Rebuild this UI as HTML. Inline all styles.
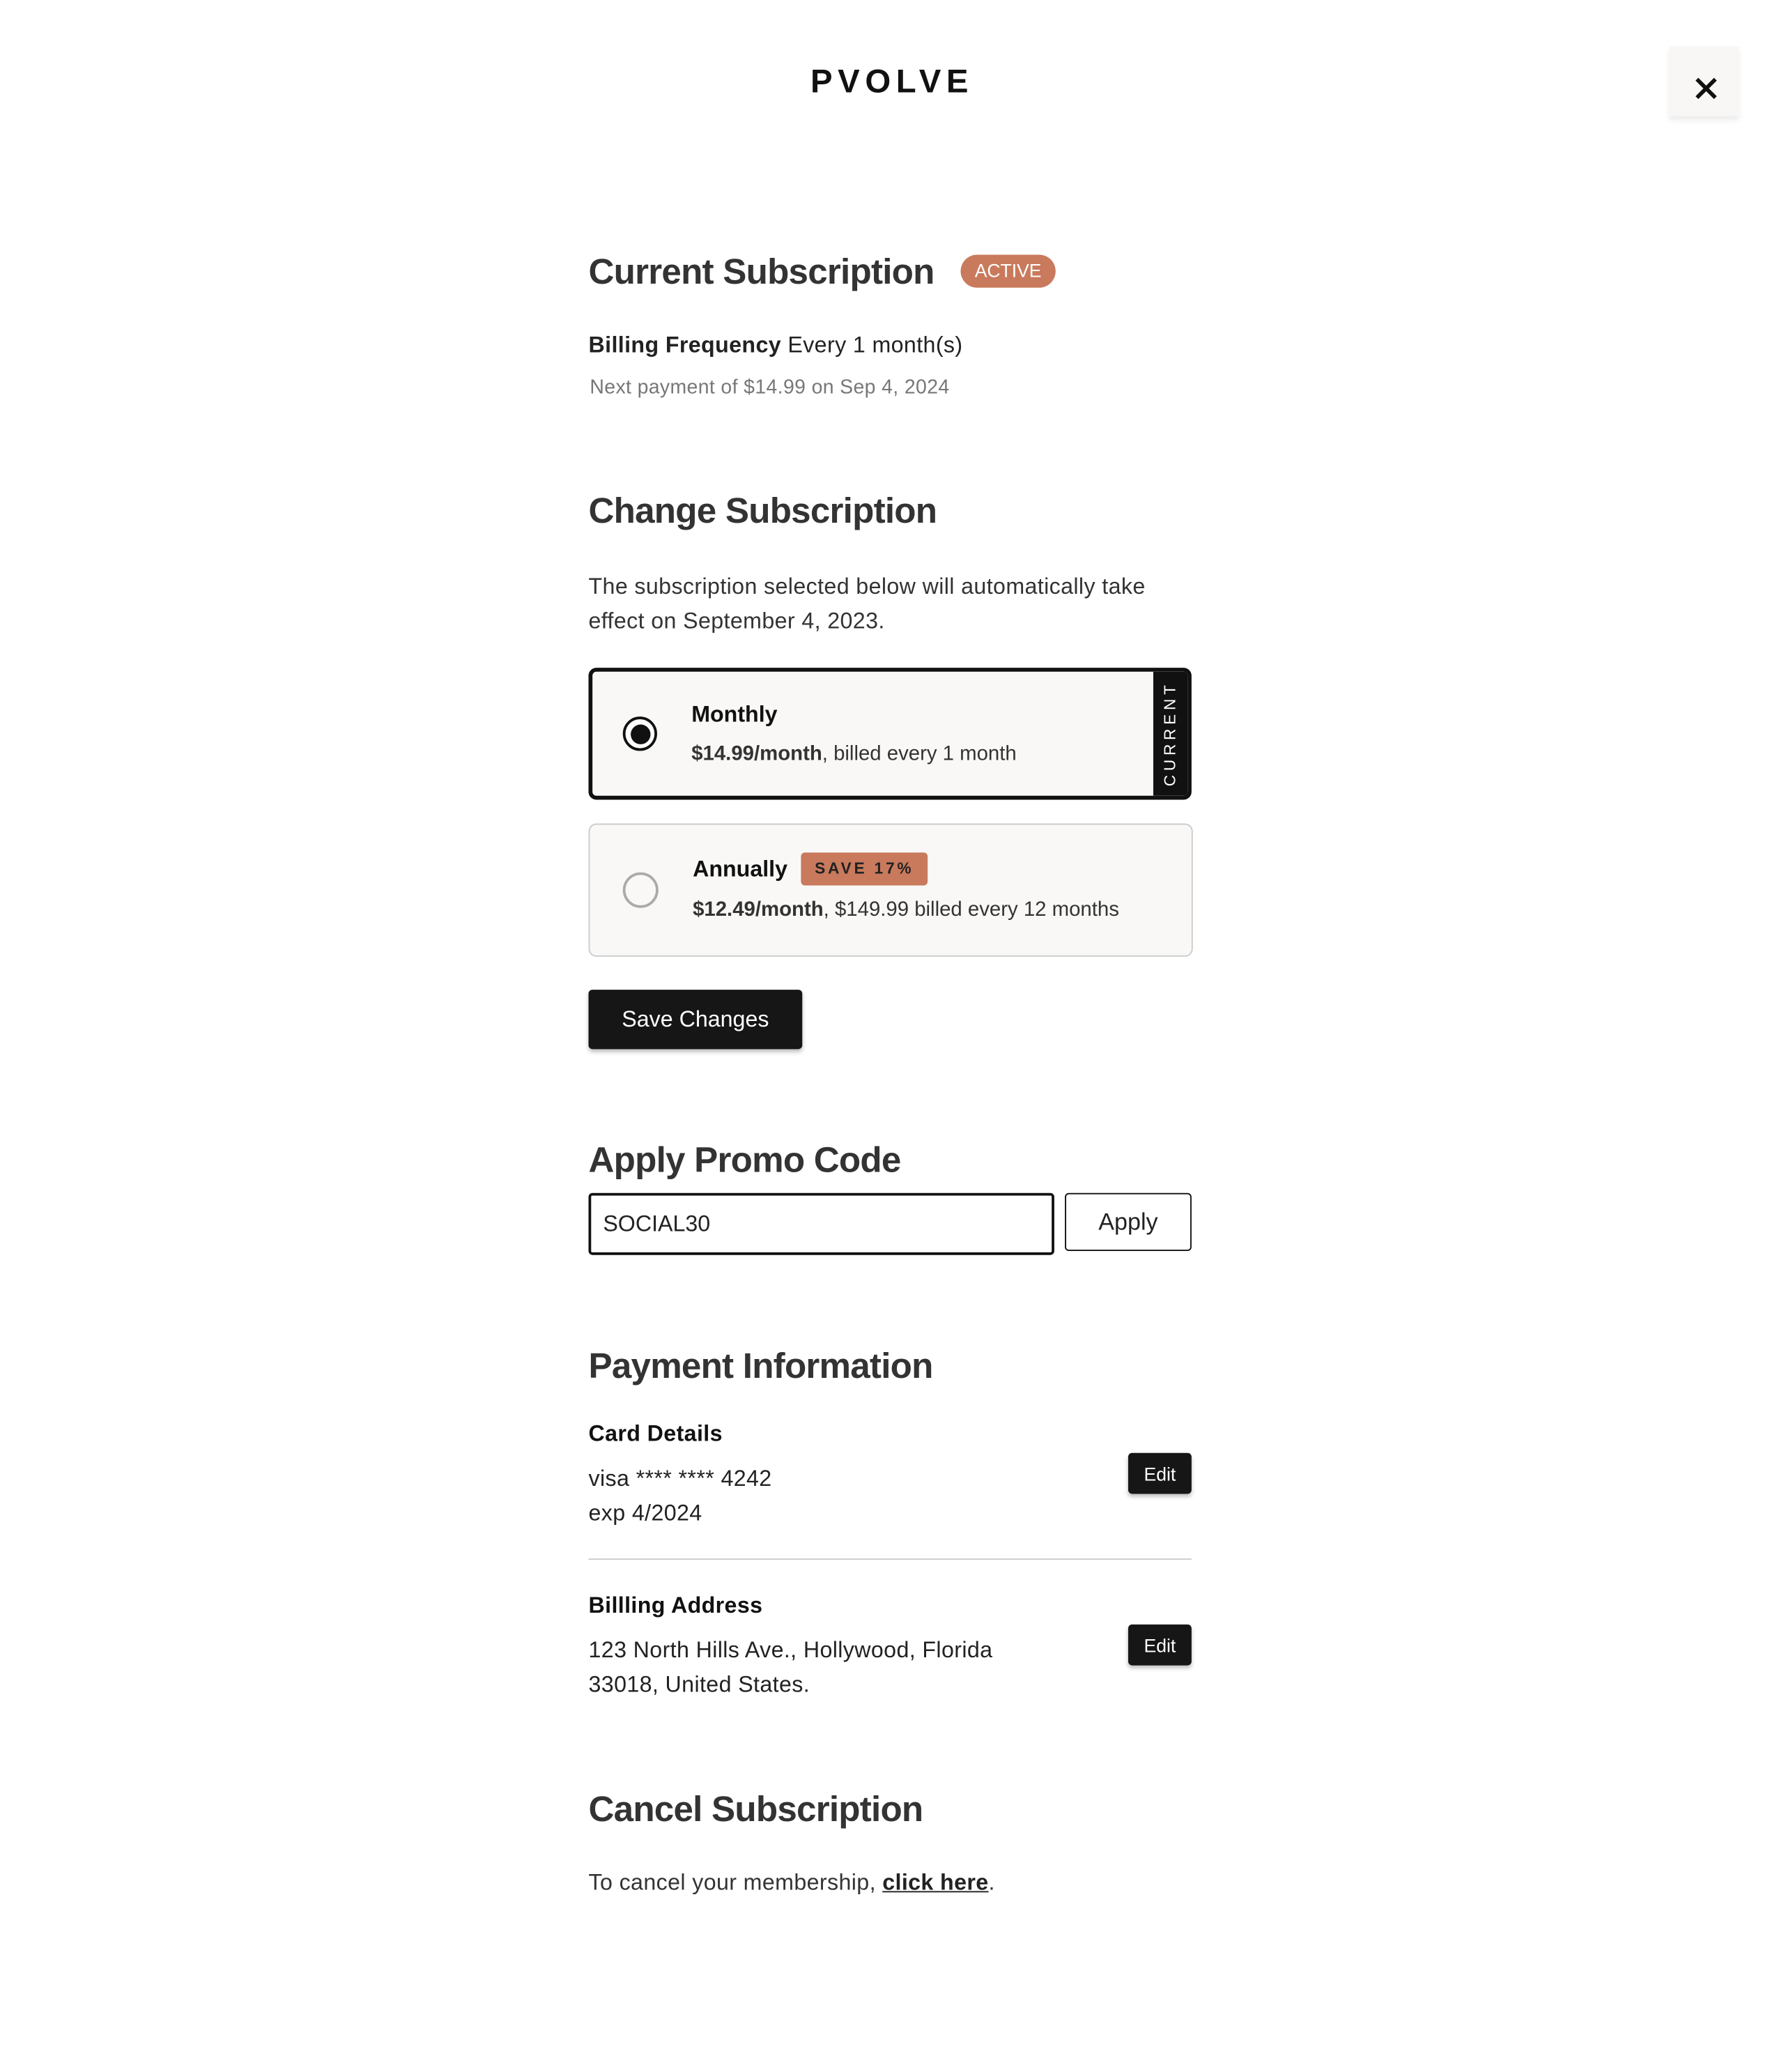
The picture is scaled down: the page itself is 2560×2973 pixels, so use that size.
<!DOCTYPE html>
<html><head><meta charset="utf-8"><style>
html,body{margin:0;padding:0;background:#fff;}
body{width:2560px;height:2972px;overflow:hidden;position:relative;}
#w{position:absolute;left:0;top:0;width:1352px;height:1570px;transform:scale(1.8935);transform-origin:0 0;font-family:"Liberation Sans",sans-serif;color:#222;}
.a{position:absolute;white-space:nowrap;}
h2{position:absolute;margin:0;font-size:27px;font-weight:bold;color:#333;letter-spacing:-0.4px;white-space:nowrap;}
.t16{font-size:17px;letter-spacing:0.2px;}
.btn{position:absolute;background:#161616;color:#fff;border-radius:3px;box-shadow:0 2px 3px rgba(0,0,0,.25);display:flex;align-items:center;justify-content:center;}
</style></head><body><div id="w">
<div class="a" style="left:0;width:1352px;text-align:center;top:48px;font-family:'Liberation Sans',sans-serif;font-weight:bold;font-size:25px;letter-spacing:4px;color:#111;">PVOLVE</div>
<div class="a" style="left:1265px;top:35px;width:53px;height:53px;background:#f8f7f5;box-shadow:0 3px 4px rgba(0,0,0,.08);">
<svg width="53" height="53" viewBox="0 0 53 53"><path d="M21 25 L35 39 M35 25 L21 39" stroke="#111" stroke-width="3" fill="none"/></svg></div>

<h2 style="left:446px;top:191px;">Current Subscription</h2>
<div class="a" style="left:728px;top:193px;width:72px;height:25px;border-radius:13px;background:#c97a5c;color:#fff;font-size:14px;line-height:25px;text-align:center;">ACTIVE</div>
<div class="a t16" style="left:446px;top:252px;"><b>Billing Frequency</b> Every 1 month(s)</div>
<div class="a" style="left:447px;top:285px;font-size:15px;letter-spacing:0.2px;color:#777;">Next payment of $14.99 on Sep 4, 2024</div>

<h2 style="left:446px;top:372px;">Change Subscription</h2>
<div class="a t16" style="left:446px;top:432px;line-height:26px;color:#333;">The subscription selected below will automatically take<br>effect on September 4, 2023.</div>

<div class="a" style="left:446px;top:506px;width:451px;height:94px;border:3px solid #111;border-radius:6px;background:#f9f8f6;overflow:hidden;">
<div style="position:absolute;right:0;top:0;width:26px;height:100%;background:#111;"></div>
<div style="position:absolute;right:13px;top:47px;transform:translate(50%,-50%) rotate(-90deg);color:#fff;font-size:12px;letter-spacing:3px;">CURRENT</div>
<div style="position:absolute;left:23px;top:34px;width:22px;height:22px;border:2.5px solid #111;border-radius:50%;background:#fff;"></div>
<div style="position:absolute;left:29px;top:40px;width:15px;height:15px;border-radius:50%;background:#111;"></div>
<div style="position:absolute;left:75px;top:23px;font-size:17px;font-weight:bold;color:#111;">Monthly</div>
<div style="position:absolute;left:75px;top:54px;font-size:15.5px;color:#333;"><b>$14.99/month</b>, billed every 1 month</div>
</div>

<div class="a" style="left:446px;top:624px;width:456px;height:99px;border:1px solid #ccc;border-radius:6px;background:#f9f8f6;">
<div style="position:absolute;left:25px;top:36px;width:23px;height:23px;border:2px solid #aaa;border-radius:50%;"></div>
<div style="position:absolute;left:78px;top:24px;font-size:17px;font-weight:bold;color:#111;">Annually</div>
<div style="position:absolute;left:160px;top:21px;width:96px;height:25px;background:#c97a5c;border-radius:3px;font-size:12px;font-weight:bold;letter-spacing:2px;line-height:25px;text-align:center;color:#222;">SAVE 17%</div>
<div style="position:absolute;left:78px;top:56px;font-size:15.5px;color:#333;"><b>$12.49/month</b>, $149.99 billed every 12 months</div>
</div>

<div class="btn" style="left:446px;top:750px;width:162px;height:45px;font-size:17px;">Save Changes</div>

<h2 style="left:446px;top:864px;">Apply Promo Code</h2>
<div class="a" style="left:446px;top:904px;width:349px;height:43px;border:2px solid #111;border-radius:3px;"><span style="position:absolute;left:9px;top:12px;font-size:17px;color:#222;">SOCIAL30</span></div>
<div class="a" style="left:807px;top:904px;width:94px;height:42px;border:1px solid #111;border-radius:3px;font-size:18px;line-height:42px;text-align:center;">Apply</div>

<h2 style="left:446px;top:1020px;">Payment Information</h2>
<div class="a t16" style="left:446px;top:1077px;font-weight:bold;color:#111;">Card Details</div>
<div class="a t16" style="left:446px;top:1108px;line-height:26px;">visa **** **** 4242<br>exp 4/2024</div>
<div class="btn" style="left:855px;top:1101px;width:48px;height:31px;font-size:14px;">Edit</div>
<div class="a" style="left:446px;top:1181px;width:457px;height:1px;background:#ccc;"></div>
<div class="a t16" style="left:446px;top:1207px;font-weight:bold;color:#111;">Billling Address</div>
<div class="a t16" style="left:446px;top:1238px;line-height:26px;">123 North Hills Ave., Hollywood, Florida<br>33018, United States.</div>
<div class="btn" style="left:855px;top:1231px;width:48px;height:31px;font-size:14px;">Edit</div>

<h2 style="left:446px;top:1356px;">Cancel Subscription</h2>
<div class="a t16" style="left:446px;top:1417px;color:#333;">To cancel your membership, <b style="text-decoration:underline;color:#222;">click here</b>.</div>
</div></body></html>
